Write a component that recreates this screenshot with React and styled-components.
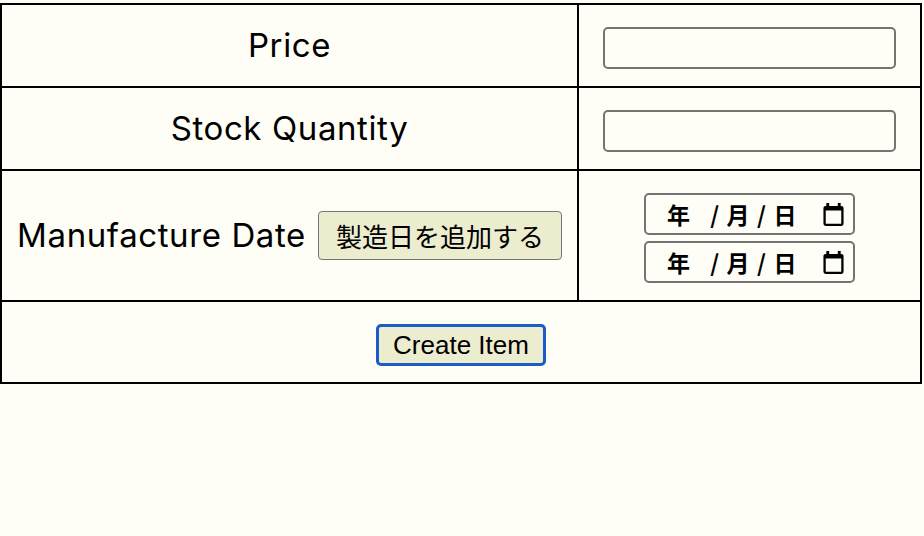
import React from "react";
import styled, { createGlobalStyle } from "styled-components";

const GlobalStyle = createGlobalStyle`
  html, body {
    margin: 0;
    padding: 0;
    background: #fefef6;
  }
  body {
    font-family: Inter, "Noto Sans CJK JP", sans-serif;
    color: #000;
  }
`;

const CalendarIcon = () => (
  <svg width="21" height="23" viewBox="0 0 14 16" aria-hidden="true">
    <path
      fillRule="evenodd"
      d="M2 0h2v2h6V0h2v2h0.5A1.5 1.5 0 0 1 14 3.5v11a1.5 1.5 0 0 1-1.5 1.5h-11A1.5 1.5 0 0 1 0 14.5v-11A1.5 1.5 0 0 1 1.5 2H2z M1.6 5.2v9.2h10.8V5.2z"
      fill="#000"
    />
  </svg>
);

const DateField = () => (
  <DateBox>
    <DateText>年 /月/日</DateText>
    <CalendarIcon />
  </DateBox>
);

const App = () => {
  return (
    <Page>
      <GlobalStyle />
      <FormTable>
        <tbody>
          <tr>
            <LabelCell>Price</LabelCell>
            <FieldCell>
              <TextInput type="text" />
            </FieldCell>
          </tr>
          <tr>
            <LabelCell>Stock Quantity</LabelCell>
            <FieldCell>
              <TextInput type="text" />
            </FieldCell>
          </tr>
          <tr>
            <LabelCell>
              <LabelLine>
                Manufacture Date
                <AddButton type="button">製造日を追加する</AddButton>
              </LabelLine>
            </LabelCell>
            <FieldCell>
              <DateStack>
                <DateField />
                <DateField />
              </DateStack>
            </FieldCell>
          </tr>
          <tr>
            <ActionCell colSpan={2}>
              <SubmitButton type="submit">Create Item</SubmitButton>
            </ActionCell>
          </tr>
        </tbody>
      </FormTable>
    </Page>
  );
};
export default App;

const Page = styled.main`
  padding-top: 3px;
  min-height: 533px;
`;

const FormTable = styled.table`
  width: 922px;
  table-layout: fixed;
  border-collapse: separate;
  border-spacing: 0;
  border-top: 2px solid #000;
  border-left: 2px solid #000;
`;

const Cell = styled.td`
  box-sizing: border-box;
  border-right: 2px solid #000;
  border-bottom: 2px solid #000;
  vertical-align: middle;
`;

const LabelCell = styled(Cell)`
  width: 577px;
  padding: 19px 14px;
  text-align: center;
  font-size: 33px;
  letter-spacing: 0.6px;
  line-height: 43px;
  white-space: nowrap;
`;

const FieldCell = styled(Cell)`
  padding: 22px 24px 17px;
`;

const ActionCell = styled(Cell)`
  padding: 22px 0 16px;
  text-align: center;
`;

const LabelLine = styled.div`
  display: inline-flex;
  align-items: center;
  gap: 12px;
`;

const TextInput = styled.input`
  display: block;
  box-sizing: border-box;
  width: 100%;
  height: 42px;
  margin: 0;
  border: 2px solid #747474;
  border-radius: 5px;
  background: #fefef6;
  font-size: 20px;
`;

const DateStack = styled.div`
  display: flex;
  flex-direction: column;
  align-items: center;
  gap: 6px;
`;

const DateBox = styled.div`
  box-sizing: border-box;
  width: 211px;
  height: 42px;
  display: flex;
  align-items: center;
  justify-content: space-between;
  padding: 0 9px 0 21px;
  border: 2px solid #747474;
  border-radius: 5px;
`;

const DateText = styled.span`
  font-family: "Noto Sans CJK JP", sans-serif;
  font-size: 23px;
  font-weight: 700;
  letter-spacing: 7.5px;
  line-height: 1;
`;

const AddButton = styled.button`
  box-sizing: border-box;
  height: 49px;
  padding: 0 17px;
  border: 1px solid #767676;
  border-radius: 4px;
  background: #ececcf;
  font-family: "Noto Sans CJK JP", sans-serif;
  font-size: 26px;
  letter-spacing: 0;
  color: #000;
`;

const SubmitButton = styled.button`
  box-sizing: border-box;
  height: 42px;
  width: 170px;
  padding: 0;
  border: 3px solid #1b5cc6;
  border-radius: 5px;
  background: #ececcf;
  font-family: "Liberation Sans", Arial, sans-serif;
  font-size: 26px;
  color: #000;
`;
